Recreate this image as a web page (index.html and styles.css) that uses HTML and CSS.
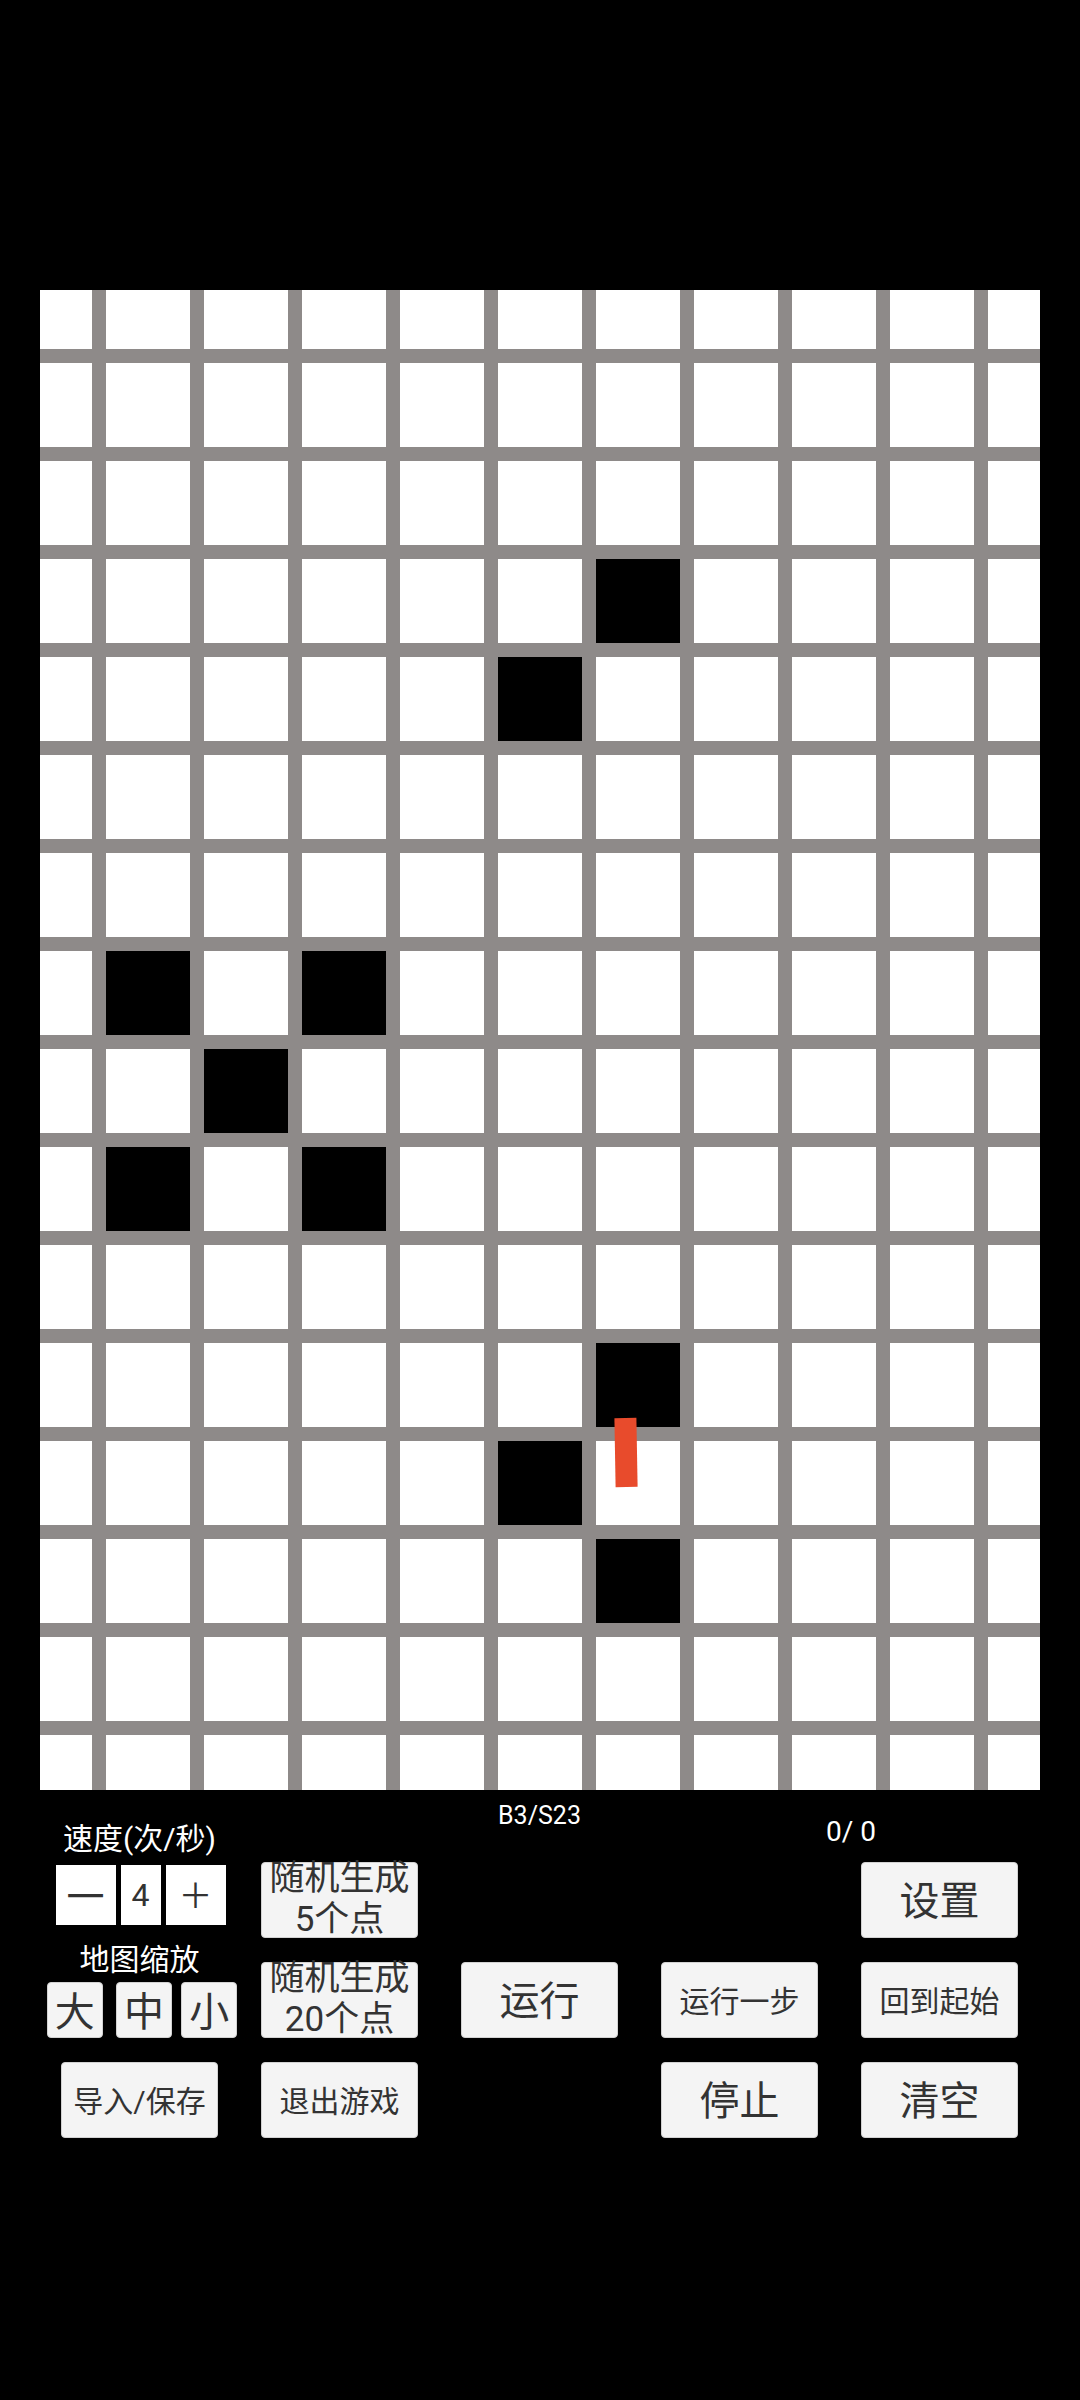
FILE: index.html
```html
<!DOCTYPE html>
<html lang="zh-CN">
<head>
<meta charset="utf-8">
<title>生命游戏</title>
<link rel="stylesheet" href="styles.css">
</head>
<body>
<div class="screen">
  <div class="top-space"></div>
  <div class="board">
    <div class="live c7 r4"></div>
    <div class="live c6 r5"></div>
    <div class="live c2 r8"></div>
    <div class="live c4 r8"></div>
    <div class="live c3 r9"></div>
    <div class="live c2 r10"></div>
    <div class="live c4 r10"></div>
    <div class="live c7 r12"></div>
    <div class="live c6 r13"></div>
    <div class="live c7 r14"></div>
    <div class="marker"></div>
  </div>
  <div class="controls">
    <div class="left-panel">
      <div class="label label-speed">速度(次/秒)</div>
      <div class="stepper">
        <div class="step-box step-btn">一</div>
        <div class="step-box step-val">4</div>
        <div class="step-box step-btn step-plus">＋</div>
      </div>
      <div class="label label-zoom">地图缩放</div>
      <div class="zoom-row">
        <div class="btn zoom-btn">大</div>
        <div class="btn zoom-btn">中</div>
        <div class="btn zoom-btn zoom-last">小</div>
      </div>
    </div>
    <div class="rule">B3/S23</div>
    <div class="counter">0/ 0</div>

    <div class="btn two-line gc2 gr2">随机生成<br>5个点</div>
    <div class="btn big gc5 gr2">设置</div>

    <div class="btn two-line gc2 gr3">随机生成<br>20个点</div>
    <div class="btn big gc3 gr3">运行</div>
    <div class="btn mid gc4 gr3">运行一步</div>
    <div class="btn mid gc5 gr3">回到起始</div>

    <div class="btn mid gc1 gr4">导入/保存</div>
    <div class="btn mid gc2 gr4">退出游戏</div>
    <div class="btn big gc4 gr4">停止</div>
    <div class="btn big gc5 gr4">清空</div>
  </div>
</div>
</body>
</html>
```

FILE: styles.css
```css
html, body {
  margin: 0;
  padding: 0;
  background: #000;
}

body {
  font-family: Roboto, "Noto Sans CJK SC", sans-serif;
  color: #fff;
}

.screen {
  width: 1080px;
  min-height: 2400px;
  background: #000;
  overflow: hidden;
}

.top-space {
  height: 290px;
}

/* ---------- board ---------- */
.board {
  position: relative;
  margin-left: 40px;
  width: 1000px;
  height: 1500px;
  background-color: #ffffff;
  background-image:
    linear-gradient(to right, #8e8a89 0, #8e8a89 14px, transparent 14px),
    linear-gradient(to bottom, #8e8a89 0, #8e8a89 14px, transparent 14px);
  background-size: 98px 100%, 100% 98px;
  background-position: 52px 0, 0 59px;
  background-repeat: repeat-x, repeat-y;
  display: grid;
  grid-template-columns: 52px repeat(9, 84px) 52px;
  grid-template-rows: 59px repeat(14, 84px) 55px;
  gap: 14px;
}

.live { background: #000; }

.c2 { grid-column: 2; }
.c3 { grid-column: 3; }
.c4 { grid-column: 4; }
.c6 { grid-column: 6; }
.c7 { grid-column: 7; }

.r4 { grid-row: 4; }
.r5 { grid-row: 5; }
.r8 { grid-row: 8; }
.r9 { grid-row: 9; }
.r10 { grid-row: 10; }
.r12 { grid-row: 12; }
.r13 { grid-row: 13; }
.r14 { grid-row: 14; }

.marker {
  position: absolute;
  left: 575px;
  top: 1128px;
  width: 22px;
  height: 69px;
  background: #e84b2c;
  transform: rotate(-1deg);
}

/* ---------- controls ---------- */
.controls {
  display: grid;
  grid-template-columns: repeat(5, 157px);
  grid-template-rows: 48px 76px 76px 76px;
  column-gap: 43px;
  row-gap: 24px;
  padding-left: 61px;
}

.gc1 { grid-column: 1; }
.gc2 { grid-column: 2; }
.gc3 { grid-column: 3; }
.gc4 { grid-column: 4; }
.gc5 { grid-column: 5; }
.gr2 { grid-row: 2; }
.gr3 { grid-row: 3; }
.gr4 { grid-row: 4; }

.left-panel {
  grid-column: 1;
  grid-row: 1 / 4;
  display: flex;
  flex-direction: column;
  align-items: center;
}

.label {
  font-size: 30px;
  line-height: 36px;
  color: #fff;
  white-space: nowrap;
  text-align: center;
}

.label-speed { margin-top: 31px; }
.label-zoom { margin-top: 17px; margin-bottom: 4px; }

.stepper {
  display: flex;
  gap: 5px;
  margin-top: 8px;
  height: 60px;
  margin-left: 2px;
}

.step-box {
  box-sizing: border-box;
  background: #fff;
  color: #333;
  display: flex;
  align-items: center;
  justify-content: center;
  height: 60px;
  padding-bottom: 3px;
}

.step-btn {
  width: 60px;
  font-size: 38px;
}

.step-plus {
  font-size: 34px;
}

.step-val {
  width: 40px;
  font-size: 32px;
  padding-bottom: 1px;
}

.zoom-row {
  display: flex;
  gap: 13px;
  margin-top: 0;
  width: 191px;
  margin-left: 5px;
}

.zoom-btn {
  width: 57px;
  height: 56px;
  font-size: 40px;
  padding-bottom: 3px;
}

.zoom-last { margin-left: -4px; }

.rule {
  grid-column: 3;
  grid-row: 1;
  justify-self: center;
  margin-top: 11px;
  font-size: 25px;
  line-height: 30px;
  color: #fff;
}

.counter {
  grid-column: 4 / 6;
  grid-row: 1;
  margin-left: 165px;
  margin-top: 25px;
  font-size: 28px;
  line-height: 33px;
  color: #fff;
  white-space: pre;
}

.btn {
  box-sizing: border-box;
  background: #f4f4f4;
  border: 1px solid #d2d2d2;
  border-radius: 4px;
  color: #333;
  display: flex;
  align-items: center;
  justify-content: center;
  text-align: center;
  white-space: nowrap;
}

.big { font-size: 40px; padding-bottom: 4px; }
.mid { font-size: 30px; padding-bottom: 3px; }
.two-line {
  font-size: 35px;
  line-height: 41px;
  padding-bottom: 2px;
}
```
